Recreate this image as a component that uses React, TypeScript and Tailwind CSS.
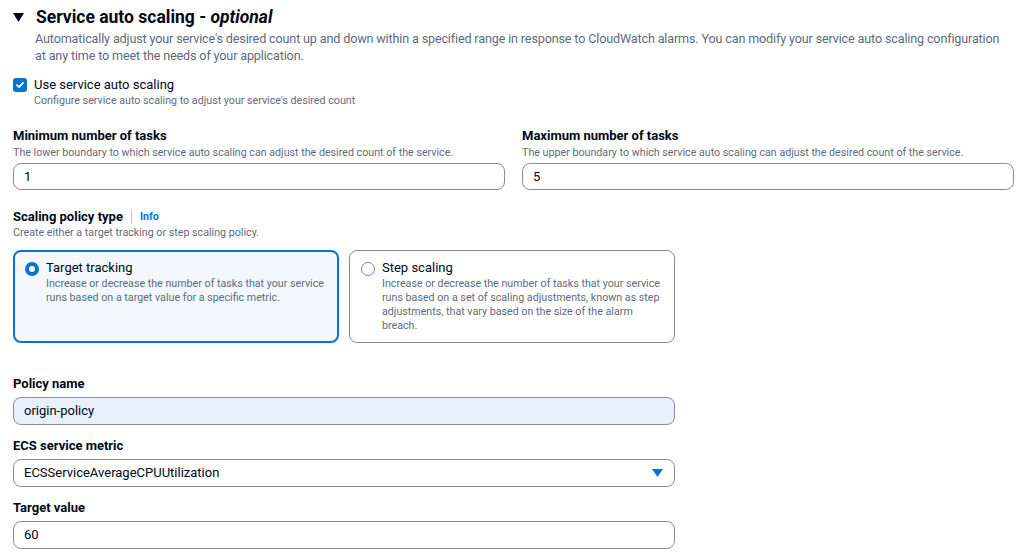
const font = { fontFamily: 'Roboto, "Open Sans", sans-serif' };

function Field({ label, hint, value }: { label: string; hint: string; value: string }) {
  return (
    <div className="flex flex-col">
      <div className="text-[13px] font-bold leading-[18px] text-[#000716]">{label}</div>
      <div className="text-[10.7px] leading-[15px] text-[#5f6b7a]">{hint}</div>
      <div className="mt-[3px] h-[27px] rounded-[8px] border border-[#8c8c94] px-[10px] flex items-center text-[13px] text-[#000716]">
        {value}
      </div>
    </div>
  );
}

function Radio({ checked }: { checked: boolean }) {
  return checked ? (
    <span className="mt-[3px] w-[14px] h-[14px] rounded-full bg-[#0972d3] flex items-center justify-center shrink-0">
      <span className="w-[6px] h-[6px] rounded-full bg-white" />
    </span>
  ) : (
    <span className="mt-[3px] w-[14px] h-[14px] rounded-full border-[1.5px] border-[#7d8998] bg-white shrink-0" />
  );
}

function Tile({ title, text, checked }: { title: string; text: string; checked: boolean }) {
  return (
    <div
      className={
        checked
          ? "w-[326px] h-[93px] rounded-[8px] border-2 border-[#0972d3] bg-[#f2f8fd] pl-[10px] pr-[6px] pt-[7px] flex gap-[7px]"
          : "w-[326px] h-[93px] rounded-[8px] border border-[#8c8c94] bg-white pl-[11px] pr-[7px] pt-[8px] flex gap-[7px]"
      }
    >
      <Radio checked={checked} />
      <div className="flex flex-col">
        <div className="text-[13px] leading-[18px] text-[#000716]">{title}</div>
        <div className="text-[10.7px] leading-[14px] text-[#5f6b7a]">{text}</div>
      </div>
    </div>
  );
}

function Stack({ label, children }: { label: string; children: React.ReactNode }) {
  return (
    <div className="flex flex-col w-[662px]">
      <div className="text-[13px] font-bold leading-[18px] text-[#000716]">{label}</div>
      <div className="mt-[4px]">{children}</div>
    </div>
  );
}

export default function App() {
  return (
    <div className="w-[1024px] h-[560px] bg-white overflow-hidden px-[13px] pt-[5px]" style={font}>
      <div className="flex items-center gap-[12px]">
        <svg width="11" height="9" viewBox="0 0 11 9">
          <path d="M0 0h11L5.5 9z" fill="#000716" />
        </svg>
        <h2 className="text-[17.5px] font-bold leading-[24px] text-[#000716]">
          Service auto scaling - <i>optional</i>
        </h2>
      </div>
      <p className="ml-[22px] mt-[1px] text-[12.6px] tracking-[-0.15px] leading-[17px] text-[#5f6b7a] whitespace-nowrap">
        Automatically adjust your service's desired count up and down within a specified range in response to
        CloudWatch alarms. You can modify your service auto scaling configuration
        <br />
        at any time to meet the needs of your application.
      </p>

      <div className="mt-[12px] flex gap-[7px]">
        <span className="mt-[2px] w-[14px] h-[14px] rounded-[3px] bg-[#0972d3] flex items-center justify-center shrink-0">
          <svg width="10" height="10" viewBox="0 0 10 10">
            <path d="M2 5.2l2 2 4-4.4" stroke="white" strokeWidth="1.8" fill="none" strokeLinecap="round" strokeLinejoin="round" />
          </svg>
        </span>
        <div className="flex flex-col">
          <div className="text-[13px] leading-[18px] text-[#000716]">Use service auto scaling</div>
          <div className="text-[10.7px] leading-[14px] text-[#5f6b7a]">
            Configure service auto scaling to adjust your service's desired count
          </div>
        </div>
      </div>

      <div className="mt-[19px] grid grid-cols-2 gap-[17px] w-[1001px]">
        <Field
          label="Minimum number of tasks"
          hint="The lower boundary to which service auto scaling can adjust the desired count of the service."
          value="1"
        />
        <Field
          label="Maximum number of tasks"
          hint="The upper boundary to which service auto scaling can adjust the desired count of the service."
          value="5"
        />
      </div>

      <div className="mt-[18px] flex items-center gap-[8px]">
        <span className="text-[13px] font-bold leading-[18px] text-[#000716]">Scaling policy type</span>
        <span className="w-px h-[14px] bg-[#c6c6cd]" />
        <span className="text-[10.7px] font-bold text-[#0972d3]">Info</span>
      </div>
      <div className="text-[10.7px] leading-[14px] text-[#5f6b7a]">Create either a target tracking or step scaling policy.</div>

      <div className="mt-[10px] flex gap-[10px]">
        <Tile
          checked
          title="Target tracking"
          text="Increase or decrease the number of tasks that your service runs based on a target value for a specific metric."
        />
        <Tile
          checked={false}
          title="Step scaling"
          text="Increase or decrease the number of tasks that your service runs based on a set of scaling adjustments, known as step adjustments, that vary based on the size of the alarm breach."
        />
      </div>

      <div className="mt-[32px] flex flex-col gap-[12px]">
        <Stack label="Policy name">
          <div className="h-[28px] rounded-[8px] border border-[#8c8c94] bg-[#e8f0fe] px-[10px] flex items-center text-[13px] text-[#000716]">
            origin-policy
          </div>
        </Stack>
        <Stack label="ECS service metric">
          <div className="h-[28px] rounded-[8px] border border-[#8c8c94] px-[10px] flex items-center justify-between text-[13px] text-[#000716]">
            <span>ECSServiceAverageCPUUtilization</span>
            <svg width="11" height="8" viewBox="0 0 11 8" className="mr-[1px]">
              <path d="M0 0h11L5.5 8z" fill="#0972d3" />
            </svg>
          </div>
        </Stack>
        <Stack label="Target value">
          <div className="h-[28px] rounded-[8px] border border-[#8c8c94] px-[10px] flex items-center text-[13px] text-[#000716]">
            60
          </div>
        </Stack>
      </div>
    </div>
  );
}
